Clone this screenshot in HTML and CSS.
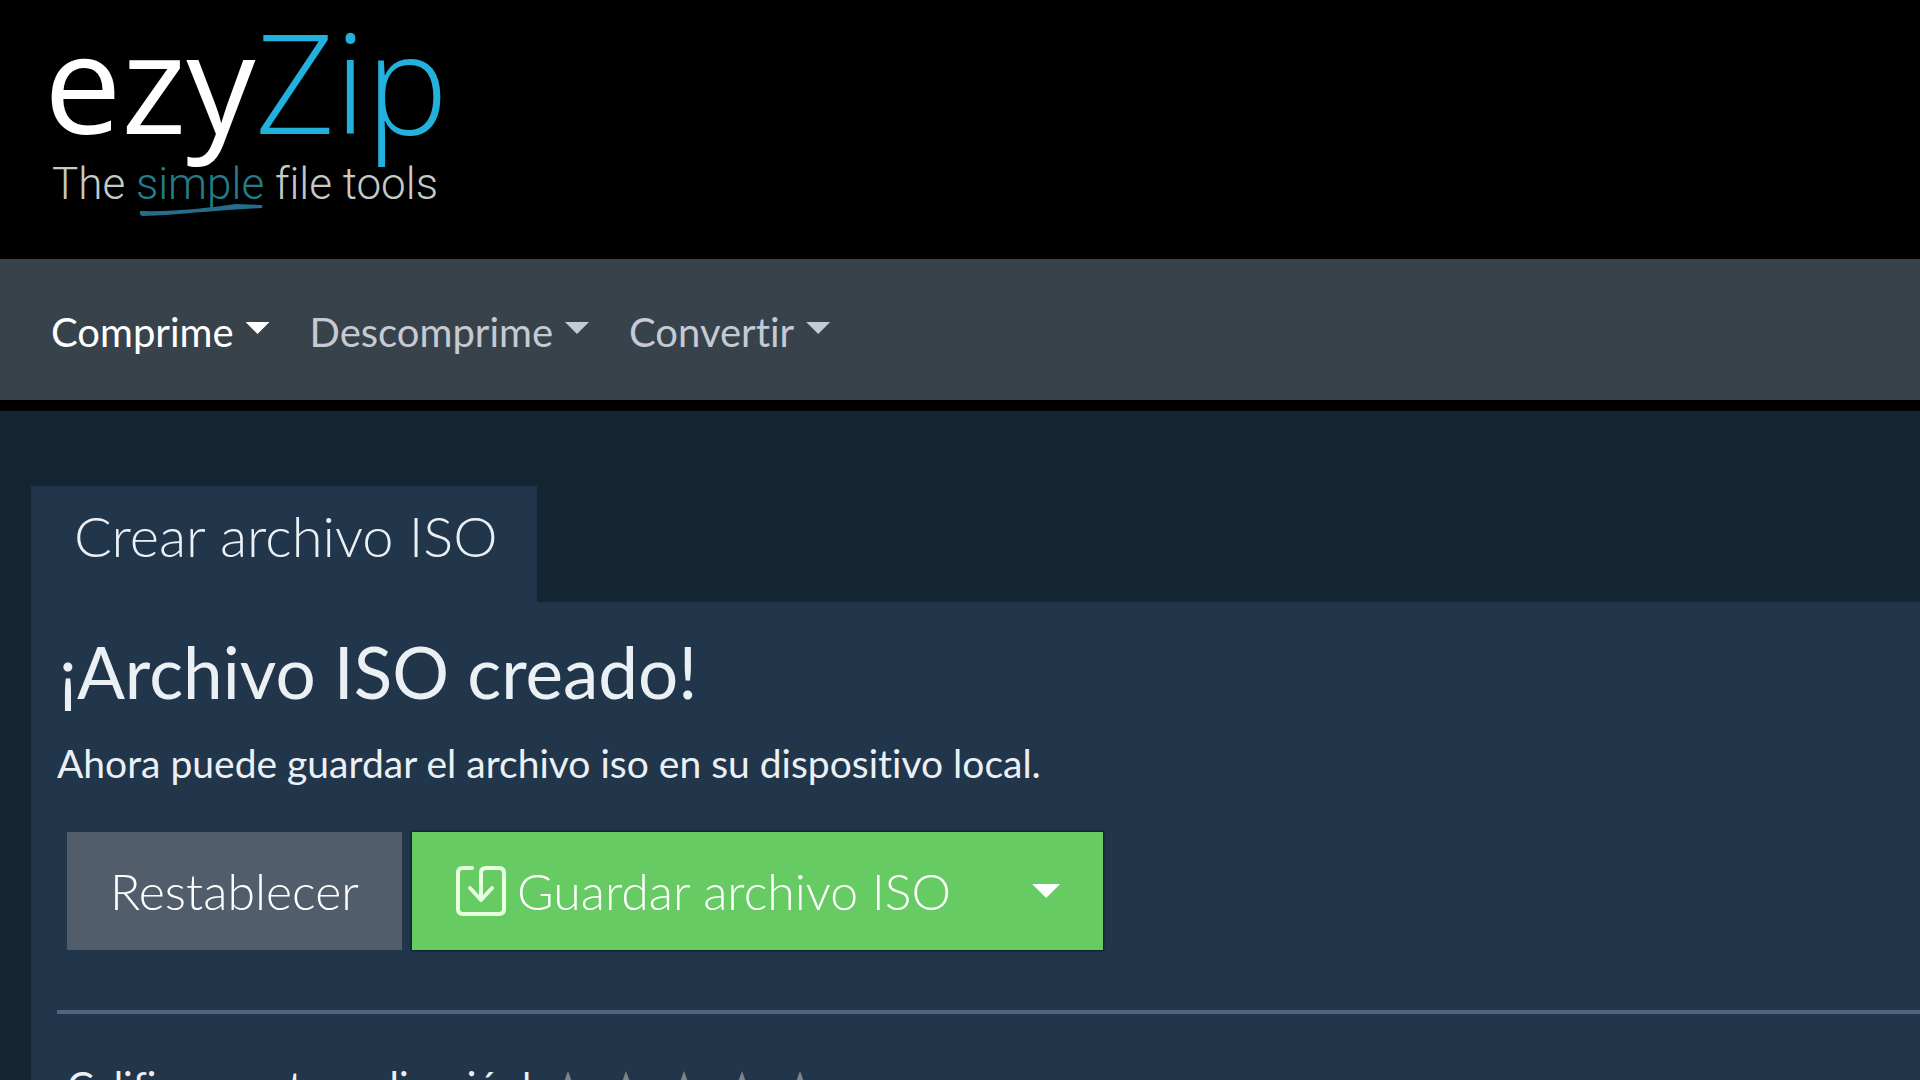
FILE: index.html
```html
<!DOCTYPE html>
<html lang="es">
<head>
<meta charset="utf-8">
<meta name="viewport" content="width=device-width, initial-scale=1">
<title>Crear archivo ISO - ezyZip</title>
<link rel="stylesheet" href="styles.css">
</head>
<body>
<header class="header">
  <a class="logo" href="#">
    <span class="logo-name">ezy<span class="logo-zip">Zip</span></span>
    <span class="logo-tagline">The <span class="logo-simple">simple<svg class="logo-stroke" viewBox="0 0 124 14" aria-hidden="true"><path d="M2 7C35 8 70 4 98 0L124 1V4C78 6 40 11 5 12Q1 12 2 7Z"/></svg></span> file tools</span>
  </a>
</header>
<nav class="nav">
  <a class="nav-link nav-link-active" href="#">Comprime<span class="caret"></span></a>
  <a class="nav-link" href="#">Descomprime<span class="caret"></span></a>
  <a class="nav-link" href="#">Convertir<span class="caret"></span></a>
</nav>
<main class="main">
  <a class="tab" href="#">Crear archivo ISO</a>
  <section class="panel">
    <h1 class="title">¡Archivo ISO creado!</h1>
    <p class="text">Ahora puede guardar el archivo iso en su dispositivo local.</p>
    <div class="actions">
      <button class="button button-reset" type="button">Restablecer</button>
      <div class="split">
        <button class="button button-save" type="button">
          <svg class="save-icon" viewBox="0 0 52 52" aria-hidden="true"><path d="M17 3H8Q3 3 3 8V44Q3 49 8 49H44Q49 49 49 44V8Q49 3 44 3H31Q26 3 26 8V35M15 23L26 35L37 23"/></svg>Guardar archivo ISO</button>
        <button class="button button-more" type="button" aria-label="Más opciones"><span class="caret caret-large"></span></button>
      </div>
    </div>
    <hr class="rule">
    <div class="rating">
      <span>¡Califica nuestra aplicación!</span>
      <span class="stars" aria-hidden="true">
        <svg class="star" viewBox="0 0 48 46"><path d="M24 0L30 17H48L34 28L39 46L24 35L9 46L14 28L0 17H18Z"/></svg>
        <svg class="star" viewBox="0 0 48 46"><path d="M24 0L30 17H48L34 28L39 46L24 35L9 46L14 28L0 17H18Z"/></svg>
        <svg class="star" viewBox="0 0 48 46"><path d="M24 0L30 17H48L34 28L39 46L24 35L9 46L14 28L0 17H18Z"/></svg>
        <svg class="star" viewBox="0 0 48 46"><path d="M24 0L30 17H48L34 28L39 46L24 35L9 46L14 28L0 17H18Z"/></svg>
        <svg class="star" viewBox="0 0 48 46"><path d="M24 0L30 17H48L34 28L39 46L24 35L9 46L14 28L0 17H18Z"/></svg>
      </span>
    </div>
  </section>
</main>
</body>
</html>
```
FILE: styles.css
```css
* { box-sizing: border-box; }
body {
  margin: 0;
  background: #142634;
  color: #ebf0f5;
  font-family: Lato, sans-serif;
  font-size: 40px;
  font-variant-ligatures: none;
  line-height: 48px;
}
a { color: inherit; text-decoration: none; }
.header { padding: 4px 44px 46px; background: #000; }
.logo { display: inline-flex; flex-direction: column; vertical-align: top; }
.logo-name {
  color: #fff;
  font-family: "Open Sans", sans-serif;
  font-size: 138px;
  line-height: 152px;
}
.logo-zip { color: #22b1dc; font-weight: 300; }
.logo-tagline {
  padding-left: 8px;
  color: #c5cbc4;
  font-family: Roboto, sans-serif;
  font-size: 44px;
  font-weight: 300;
  line-height: 57px;
}
.logo-simple { position: relative; color: #247d89; }
.logo-stroke { position: absolute; left: 0; bottom: -8px; width: 100%; height: 14px; fill: #246d8b; }
.nav {
  display: flex;
  gap: 40px;
  padding: 49px 51px 44px;
  border-bottom: 11px solid #000;
  background: #38424b;
}
.nav-link { display: flex; color: #c5cad3; }
.nav-link-active { color: #fff; }
.caret {
  width: 24px;
  height: 12px;
  margin: 14px 0 0 12px;
  background: currentColor;
  clip-path: polygon(0 0, 100% 0, 50% 100%);
}
.main { padding: 75px 0 0 31px; }
.tab {
  display: inline-block;
  padding: 16px 39px 32px 43px;
  background: #22364b;
  font-size: 56px;
  font-weight: 300;
  line-height: 68px;
  vertical-align: top;
}
.panel { padding: 28px 0 32px 26px; background: #22364b; }
.title { margin: 0; padding-left: 2px; font-size: 71px; font-weight: 400; line-height: 84px; }
.text { margin: 25px 0 45px; font-size: 39px; }
.actions { display: flex; gap: 10px; padding-left: 10px; }
.button {
  display: flex;
  align-items: center;
  height: 118px;
  padding: 0 43px;
  border: 0;
  color: #fff;
  font: 300 50px/60px Lato, sans-serif;
}
.button-reset { background: #515d6b; }
.split { display: flex; box-shadow: 0 0 2px 1px #0a2029; }
.button-save, .button-more { background: #65cb62; }
.button-save { gap: 10px; padding-right: 38px; }
.save-icon { width: 52px; height: 52px; fill: none; stroke: #e6ffdf; stroke-width: 4; stroke-linecap: round; stroke-linejoin: round; }
.caret-large { width: 28px; height: 14px; margin: 0; }
.rule { height: 4px; margin: 60px 0 48px; border: 0; background: #50657c; }
.rating { display: flex; gap: 12px; }
.stars { display: flex; gap: 10px; padding-top: 9px; }
.star { width: 48px; height: 46px; fill: #7d858c; }
```
